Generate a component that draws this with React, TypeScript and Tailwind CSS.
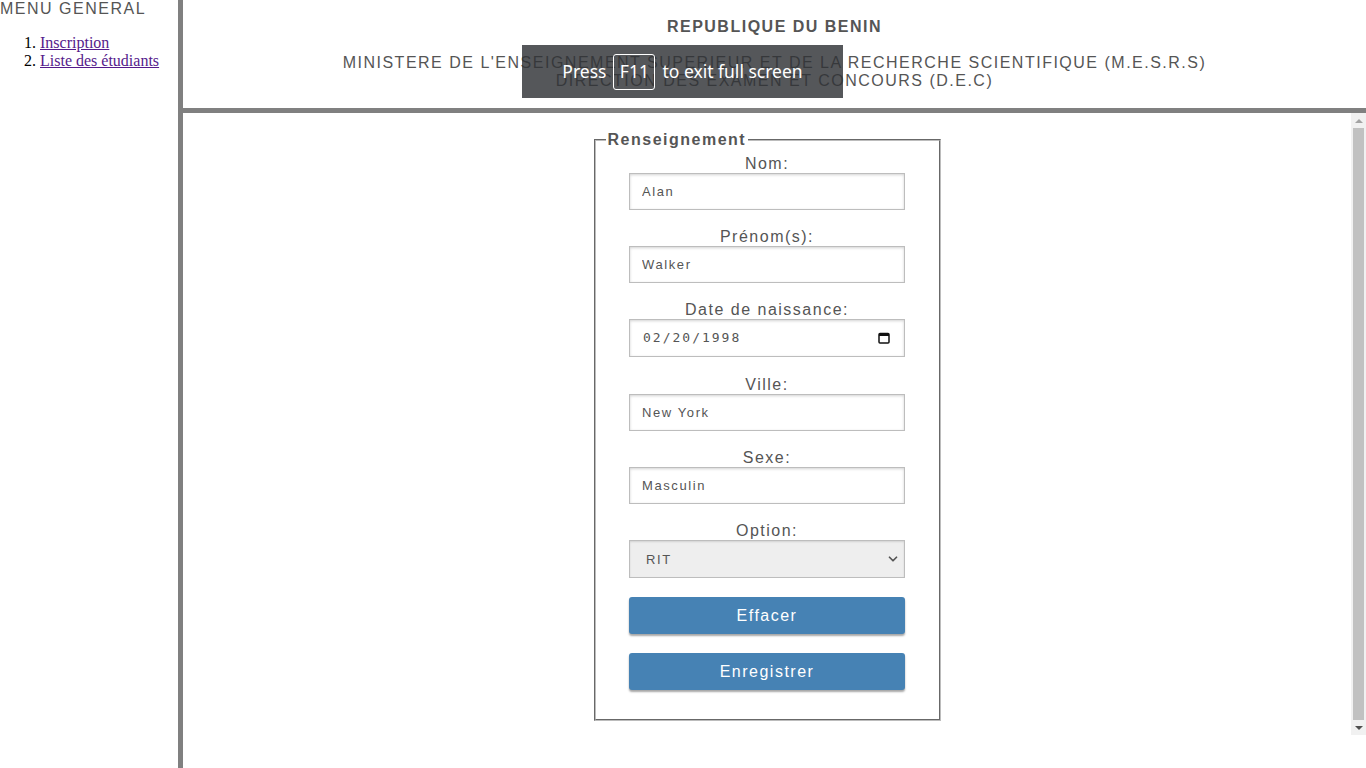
import React from 'react';
import { ChevronDown } from 'lucide-react';

const labelCls =
  "block pt-[1px] text-center text-[16px] leading-[18px] tracking-[1.5px] text-[#555]";
const inputCls =
  "block mx-auto w-[276px] h-[37px] border border-[#bdbdbd] bg-white pl-[12px] text-[13px] tracking-[1.6px] text-[#555] shadow-[inset_0_1px_3px_rgba(0,0,0,0.18)] outline-none";
const btnCls =
  "mx-auto block h-[37px] w-[276px] rounded-[3px] bg-[#4682b4] text-[16px] tracking-[1.5px] text-white shadow-[0_2px_2px_rgba(0,0,0,0.35)]";

const Field: React.FC<{ label: string; value: string }> = ({ label, value }) => (
  <div className="mb-[17px]">
    <label className={labelCls}>{label}</label>
    <input className={inputCls} defaultValue={value} readOnly />
  </div>
);

const App: React.FC = () => {
  return (
    <div className="relative flex h-[768px] w-[1366px] overflow-hidden bg-white font-['Liberation_Sans',Arial,sans-serif]">
      {/* menu frame */}
      <aside className="w-[178px] shrink-0">
        <div className="text-[16px] leading-[18px] tracking-[1.5px] text-[#555]">MENU GENERAL</div>
        <ol className="mt-4 list-decimal pl-10 font-['Liberation_Serif','Times_New_Roman',serif] text-[16px] leading-[18px] text-black">
          <li>
            <a href="#" className="text-[#551a8b] underline">Inscription</a>
          </li>
          <li>
            <a href="#" className="text-[#551a8b] underline">Liste des étudiants</a>
          </li>
        </ol>
      </aside>
      <div className="w-[5px] shrink-0 bg-[#808080]" />

      <div className="flex flex-1 flex-col">
        {/* header frame */}
        <header className="h-[108px] pt-[18px] text-center text-[16px] leading-[18px] tracking-[1.5px] text-[#555]">
          <div className="font-bold">REPUBLIQUE DU BENIN</div>
          <div className="mt-[18px]">
            MINISTERE DE L'ENSEIGNEMENT SUPERIEUR ET DE LA RECHERCHE SCIENTIFIQUE (M.E.S.R.S)
          </div>
          <div>DIRECTION DES EXAMEN ET CONCOURS (D.E.C)</div>
        </header>
        <div className="h-[5px] bg-[#808080]" />

        {/* content frame */}
        <div className="flex h-[622px]">
          <main className="flex flex-1 justify-center pt-[18px]">
            <form>
              <fieldset className="w-[347px] border-2 border-[#bcbcbc] px-3 pt-[5px] pb-[29px] [border-style:groove]">
                <legend className="-ml-[2px] px-0.5 text-[16px] font-bold leading-[18px] tracking-[1.5px] text-[#555]">
                  Renseignement
                </legend>
                <Field label="Nom:" value="Alan" />
                <Field label="Prénom(s):" value="Walker" />
                <div className="mb-[18px]">
                  <label className={labelCls}>Date de naissance:</label>
                  <div className="mx-auto flex h-[38px] w-[276px] items-center justify-between border border-[#bdbdbd] bg-white pl-[13px] pr-[14px] shadow-[inset_0_1px_3px_rgba(0,0,0,0.18)]">
                    <span className="font-['DejaVu_Sans_Mono',monospace] text-[13px] tracking-[2px] text-[#555]">
                      02/20/1998
                    </span>
                    <svg width="12" height="12" viewBox="0 0 12 12">
                      <rect x="1" y="1.5" width="10" height="9.5" rx="1" fill="none" stroke="#111" strokeWidth="1.5" />
                      <rect x="1" y="1.5" width="10" height="2.5" fill="#111" />
                    </svg>
                  </div>
                </div>
                <Field label="Ville:" value="New York" />
                <Field label="Sexe:" value="Masculin" />
                <div className="mb-[19px]">
                  <label className={labelCls}>Option:</label>
                  <div className="mx-auto flex h-[38px] w-[276px] items-center justify-between border border-[#bdbdbd] bg-[#eeeeee] pl-[16px] pr-[4px] shadow-[inset_0_1px_2px_rgba(0,0,0,0.12)]">
                    <span className="pt-[1px] text-[13px] tracking-[1.6px] text-[#555]">RIT</span>
                    <ChevronDown size={14} strokeWidth={3} className="text-[#555]" />
                  </div>
                </div>
                <button type="button" className={`${btnCls} mb-[19px]`}>
                  Effacer
                </button>
                <button type="button" className={btnCls}>
                  Enregistrer
                </button>
              </fieldset>
            </form>
          </main>

          {/* scrollbar */}
          <div className="flex w-[15px] shrink-0 flex-col items-center bg-[#f1f1f1]">
            <div className="flex h-[15px] w-full items-center justify-center">
              <div className="h-0 w-0 border-x-[4px] border-b-[4px] border-x-transparent border-b-[#a3a3a3]" />
            </div>
            <div className="w-[11px] flex-1 bg-[#c1c1c1]" />
            <div className="flex h-[15px] w-full items-center justify-center">
              <div className="h-0 w-0 border-x-[4px] border-t-[4px] border-x-transparent border-t-[#505050]" />
            </div>
          </div>
        </div>
      </div>

      {/* full screen notice */}
      <div className="absolute left-[522px] top-[45px] flex h-[53px] w-[321px] items-center justify-center gap-[7px] bg-[rgba(48,50,54,0.82)] font-['Noto_Sans','Open_Sans',sans-serif] text-[17.5px] text-white">
        <span>Press</span>
        <span className="flex h-[36px] w-[42px] items-center justify-center rounded-[3px] border border-white">F11</span>
        <span>to exit full screen</span>
      </div>
    </div>
  );
};

export default App;
